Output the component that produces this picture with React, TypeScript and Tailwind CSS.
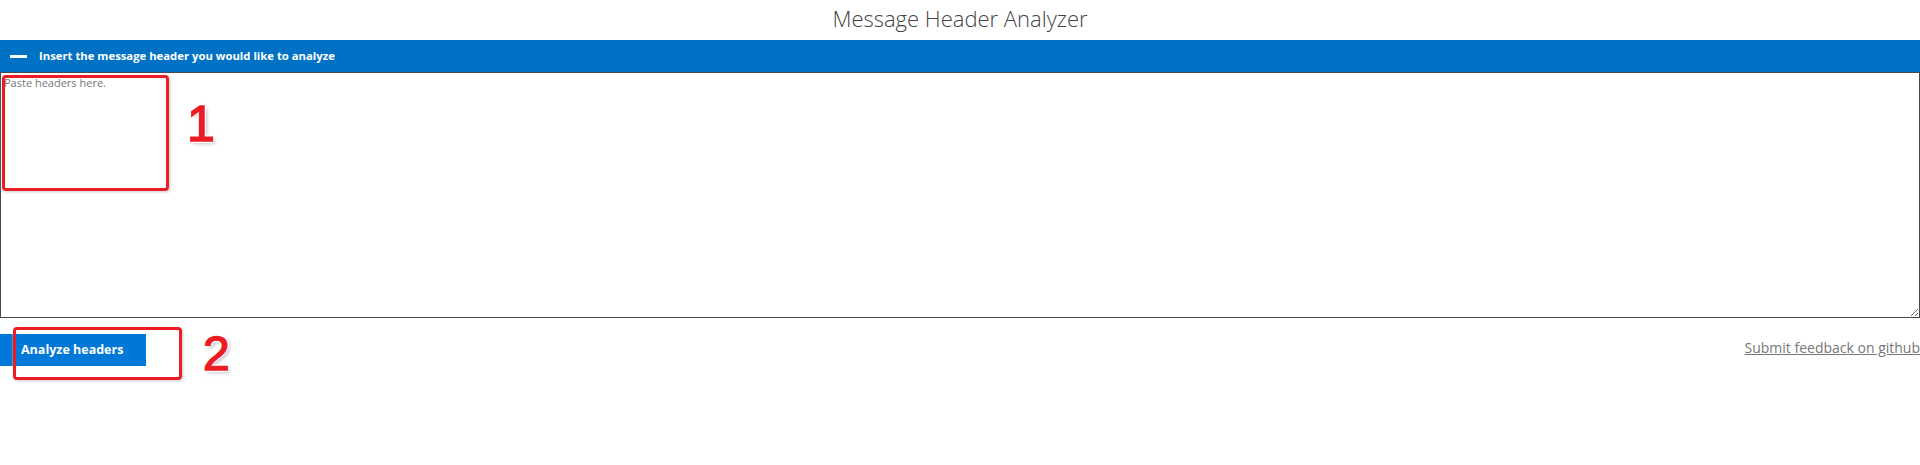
function Callout({ n, className }: { n: string; className: string }) {
  return (
    <span
      className={`absolute font-['Liberation_Sans',sans-serif] text-[#ec1c24] leading-none [-webkit-text-stroke:1.5px_#ec1c24] [text-shadow:2px_0_0_#fff,-2px_0_0_#fff,0_2px_0_#fff,0_-2px_0_#fff,2px_2px_4px_rgba(0,0,0,0.35)] ${className}`}
    >
      {n}
    </span>
  );
}

export default function App() {
  return (
    <main className="relative min-h-[465px] w-full bg-white font-['Segoe_UI','Open_Sans',sans-serif]">
      <h1 className="flex h-10 items-center justify-center pb-1 text-[22px] font-light text-[#444]">
        Message Header Analyzer
      </h1>

      <div className="flex h-[33px] items-center gap-[12px] border-b border-[#4a4a4a] bg-[#0072c6] pl-[10px] text-white">
        <span className="h-[3px] w-[17px] bg-white" />
        <span className="text-[11.3px] font-bold">
          Insert the message header you would like to analyze
        </span>
      </div>

      <textarea
        className="block h-[245px] w-full resize-y border border-t-0 border-[#4a4a4a] px-[3px] py-[2px] text-[11px] text-[#333] outline-none placeholder:text-[#777]"
        placeholder="Paste headers here."
      />

      <div className="mt-[16px] flex items-start justify-between">
        <button className="h-8 w-[146px] bg-[#0078d7] pl-[21px] text-left text-[12.5px] font-bold text-white">
          Analyze headers
        </button>
        <a href="#" className="mt-[3px] text-[14px] text-[#777] underline">
          Submit feedback on github
        </a>
      </div>

      {/* annotation overlay */}
      <div className="pointer-events-none absolute left-[2px] top-[75px] h-[116px] w-[167px] rounded-[4px] border-[3px] border-[#ec1c24] shadow-[0_0_2px_rgba(255,255,255,0.9),1px_1px_3px_rgba(0,0,0,0.25)]" />
      <Callout n="1" className="left-[187px] top-[99px] text-[50px]" />
      <div className="pointer-events-none absolute left-[13px] top-[327px] h-[53px] w-[169px] rounded-[4px] border-[3px] border-[#ec1c24] shadow-[0_0_2px_rgba(255,255,255,0.9),1px_1px_3px_rgba(0,0,0,0.25)]" />
      <Callout n="2" className="left-[203px] top-[330px] text-[48px]" />
    </main>
  );
}
